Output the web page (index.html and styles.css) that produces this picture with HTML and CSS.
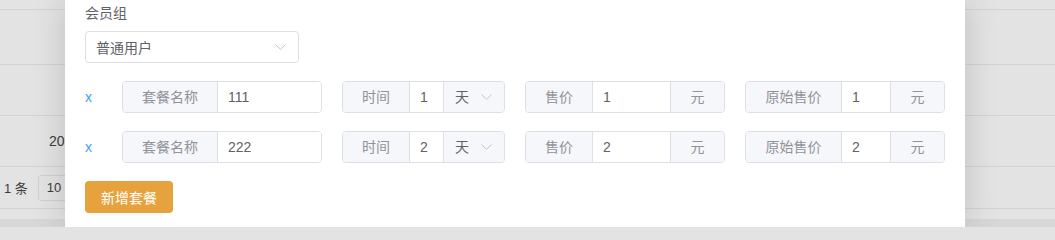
FILE: index.html
```html
<!DOCTYPE html>
<html lang="zh-CN">
<head>
<meta charset="utf-8">
<title>套餐设置</title>
<link rel="stylesheet" href="styles.css">
</head>
<body>
<div class="page">
  <div class="trow r0"></div>
  <div class="trow r1"></div>
  <div class="trow r2"></div>
  <div class="trow r3"><span class="num">20</span></div>
  <div class="pager">
    <span class="total">1 条</span>
    <span class="size">10</span>
  </div>
  <div class="pgap"></div>
  <div class="band"></div>
</div>

<div class="overlay-dim"></div>

<div class="modal">
  <div class="form-label">会员组</div>
  <div class="select">
    <span class="select-text">普通用户</span>
    <svg class="chev" width="11" height="6" viewBox="0 0 11 6"><path d="M0.5 0.5 L5.5 5.3 L10.5 0.5" fill="none" stroke="#c0c4cc" stroke-width="1"/></svg>
  </div>

  <div class="pkg-row">
    <span class="del">x</span>
    <div class="group g-name">
      <span class="prepend p-name">套餐名称</span>
      <span class="input">111</span>
    </div>
    <div class="group g-time">
      <span class="prepend p-time">时间</span>
      <span class="input i-time">1</span>
      <span class="append a-unit">天<svg class="chev-s" width="11" height="6" viewBox="0 0 11 6"><path d="M0.5 0.5 L5.5 5.3 L10.5 0.5" fill="none" stroke="#c0c4cc" stroke-width="1"/></svg></span>
    </div>
    <div class="group g-price">
      <span class="prepend p-price">售价</span>
      <span class="input i-price">1</span>
      <span class="append a-yuan">元</span>
    </div>
    <div class="group g-orig">
      <span class="prepend p-orig">原始售价</span>
      <span class="input i-orig">1</span>
      <span class="append a-yuan">元</span>
    </div>
  </div>

  <div class="pkg-row">
    <span class="del">x</span>
    <div class="group g-name">
      <span class="prepend p-name">套餐名称</span>
      <span class="input">222</span>
    </div>
    <div class="group g-time">
      <span class="prepend p-time">时间</span>
      <span class="input i-time">2</span>
      <span class="append a-unit">天<svg class="chev-s" width="11" height="6" viewBox="0 0 11 6"><path d="M0.5 0.5 L5.5 5.3 L10.5 0.5" fill="none" stroke="#c0c4cc" stroke-width="1"/></svg></span>
    </div>
    <div class="group g-price">
      <span class="prepend p-price">售价</span>
      <span class="input i-price">2</span>
      <span class="append a-yuan">元</span>
    </div>
    <div class="group g-orig">
      <span class="prepend p-orig">原始售价</span>
      <span class="input i-orig">2</span>
      <span class="append a-yuan">元</span>
    </div>
  </div>

  <button class="btn-add">新增套餐</button>
</div>
</body>
</html>
```

FILE: styles.css
```css
* { box-sizing: border-box; }
html, body {
  margin: 0;
  padding: 0;
  width: 1055px;
  height: 227px;
  overflow: hidden;
}
body {
  background: #e3e3e3;
  font-family: "Liberation Sans", "Noto Sans CJK SC", sans-serif;
  font-size: 14px;
  position: relative;
}

/* background page (under overlay) */
.page {
  display: flex;
  flex-direction: column;
  height: 227px;
  color: #4a4a4a;
}
.trow { border-bottom: 1px solid #d3d3d3; flex: none; }
.r0 { height: 10px; }
.r1 { height: 55px; }
.r2 { height: 51px; }
.r3 {
  height: 51px;
  display: flex;
  align-items: center;
  padding-left: 49px;
  font-size: 14px;
  color: #3c3c3c;
}
.pager {
  height: 42px;
  flex: none;
  border-bottom: 1px solid #d3d3d3;
  display: flex;
  align-items: center;
  padding-left: 4px;
  font-size: 13px;
  color: #3c3c3c;
}
.total { margin-right: 10px; }
.size {
  display: inline-flex;
  align-items: center;
  height: 26px;
  width: 60px;
  padding-left: 8px;
  border: 1px solid #d0d0d0;
  border-radius: 3px;
  font-size: 13px;
}
.pgap { height: 10px; flex: none; }
.band { flex: 1; background: #d7d7d7; }

.overlay-dim { display: none; }

/* modal */
.modal {
  position: absolute;
  left: 65px;
  top: 0;
  width: 900px;
  height: 227px;
  background: #fff;
  padding: 2px 20px 0;
  box-shadow: 0 0 32px rgba(0, 0, 0, 0.16);
  color: #606266;
}
.form-label {
  line-height: 22px;
  height: 22px;
  color: #606266;
}
.select {
  margin-top: 7px;
  width: 214px;
  height: 32px;
  border: 1px solid #dcdfe6;
  border-radius: 4px;
  display: flex;
  align-items: center;
  justify-content: space-between;
  padding: 0 12px 0 10px;
  color: #606266;
}
.chev { display: block; }

.pkg-row {
  margin-top: 18px;
  height: 32px;
  display: flex;
  align-items: center;
}
.del {
  width: 37px;
  color: #409eff;
  font-size: 14px;
  line-height: 32px;
  padding-left: 0;
}
.group {
  display: flex;
  height: 32px;
  border: 1px solid #dcdfe6;
  border-radius: 4px;
  overflow: hidden;
  line-height: 30px;
}
.group + .group { margin-left: 20px; }
.g-name, .g-price, .g-orig { width: 200px; }
.g-time { width: 163px; }

.prepend {
  flex: none;
  background: #f5f7fa;
  color: #909399;
  border-right: 1px solid #dcdfe6;
  text-align: center;
}
.p-name { width: 95px; }
.p-time { width: 67px; }
.p-price { width: 67px; }
.p-orig { width: 96px; }

.input {
  flex: 1;
  padding: 0 10px;
  color: #606266;
  background: #fff;
}
.i-time { flex: none; width: 34px; border-right: 1px solid #dcdfe6; }
.i-price { flex: none; width: 78px; border-right: 1px solid #dcdfe6; }
.i-orig { flex: none; width: 49px; border-right: 1px solid #dcdfe6; }

.append {
  flex: 1;
  background: #f5f7fa;
}
.a-unit {
  display: flex;
  align-items: center;
  padding-left: 11px;
  color: #606266;
}
.chev-s { margin-left: 12px; display: block; }
.a-yuan {
  text-align: center;
  color: #909399;
}

.btn-add {
  margin-top: 18px;
  width: 88px;
  height: 32px;
  border: none;
  border-radius: 4px;
  background: #e6a23c;
  color: #fff;
  font-family: "Liberation Sans", "Noto Sans CJK SC", sans-serif;
  font-size: 14px;
  padding: 0;
  cursor: pointer;
}
```
